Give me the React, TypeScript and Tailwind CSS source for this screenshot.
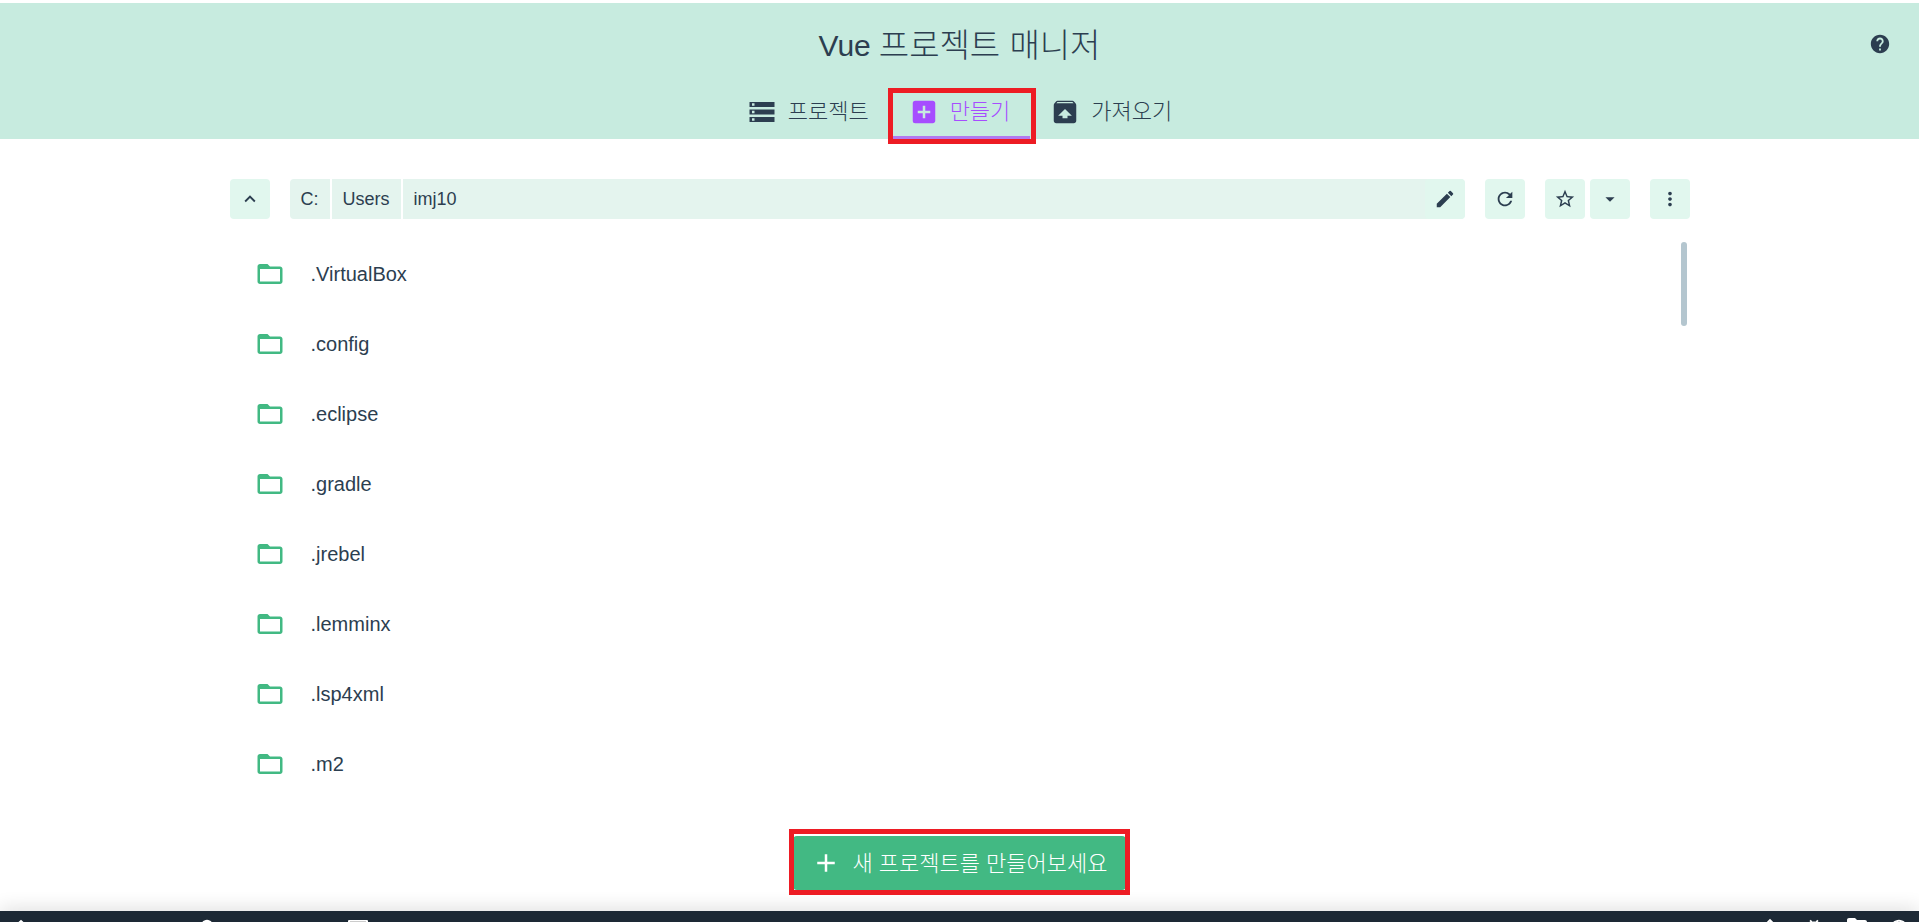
import { IconType } from "react-icons";
import {
  MdAdd,
  MdAddBox,
  MdArrowDropDown,
  MdBugReport,
  MdEdit,
  MdHelp,
  MdHome,
  MdInvertColors,
  MdKeyboardArrowUp,
  MdLanguage,
  MdMoreVert,
  MdPlace,
  MdRefresh,
  MdStarBorder,
  MdStorage,
} from "react-icons/md";

const folders = [
  ".VirtualBox",
  ".config",
  ".eclipse",
  ".gradle",
  ".jrebel",
  ".lemminx",
  ".lsp4xml",
  ".m2",
];

const UnarchiveIcon = ({ className }: { className?: string }) => (
  <svg viewBox="0 0 24 24" fill="currentColor" className={className}>
    <path d="M20.55 5.22l-1.39-1.68C18.88 3.21 18.47 3 18 3H6c-.47 0-.88.21-1.15.55L3.46 5.22C3.17 5.57 3 6.01 3 6.5V19c0 1.1.89 2 2 2h14c1.1 0 2-.9 2-2V6.5c0-.49-.17-.93-.45-1.28zM12 9.5l5.5 5.5H14v2h-4v-2H6.5L12 9.5zM5.12 5l.82-1h12l.93 1H5.12z" />
  </svg>
);

const FolderIcon = () => (
  <svg viewBox="0 0 24 24" fill="currentColor" className="size-[30px] text-[#42b983]">
    <path d="M20 6h-8l-2-2H4c-1.1 0-1.99.9-1.99 2L2 18c0 1.1.9 2 2 2h16c1.1 0 2-.9 2-2V8c0-1.1-.9-2-2-2zm0 12H4V8h16v10z" />
  </svg>
);

type IconButtonProps = {
  icon: IconType;
  label: string;
};

const IconButton = ({ icon: Icon, label }: IconButtonProps) => {
  return (
    <button
      aria-label={label}
      className="flex size-10 shrink-0 items-center justify-center rounded-[4px] bg-[#e1f7ee]"
    >
      <Icon className="size-[22px]" />
    </button>
  );
};

const tabClass = "relative flex h-[55px] items-center gap-[11px] px-5 text-[22px]";

const App = () => {
  return (
    <div className="flex h-screen flex-col overflow-hidden bg-white pt-[3px] font-['Liberation_Sans','Noto_Sans_CJK_KR',sans-serif] text-[#2c3e50]">
      <header className="relative flex shrink-0 flex-col items-center bg-[#c7ebdf]">
        <h1 className="flex h-[81px] items-center gap-2 pt-1 text-[30px] font-light">
          Vue <span className="text-[33px]">프로젝트 매니저</span>
        </h1>
        <nav className="flex font-light">
          <a href="#projects" className={tabClass}>
            <MdStorage className="size-[30px]" />
            프로젝트
          </a>
          <a href="#create" className={`${tabClass} z-10 text-[#a64dff]`}>
            <MdAddBox className="size-[30px]" />
            만들기
            <span className="absolute inset-x-0 bottom-0 h-[3px] bg-[#b279f0]" />
            <span className="absolute -right-1.5 -bottom-[5px] -left-px top-1 border-5 border-[#ed1c24]" />
          </a>
          <a href="#import" className={tabClass}>
            <UnarchiveIcon className="size-[30px]" />
            가져오기
          </a>
        </nav>
        <button aria-label="help" className="absolute top-[30px] right-7">
          <MdHelp className="size-[22px]" />
        </button>
      </header>

      <main className="mx-auto flex min-h-0 w-full max-w-[1460px] flex-1 flex-col pt-10">
        <div className="flex">
          <IconButton icon={MdKeyboardArrowUp} label="up" />
          <div className="mx-5 flex flex-1 gap-0.5 overflow-hidden rounded-[4px] text-lg">
            <button className="bg-[#e4f4ee] px-[11px]">C:</button>
            <button className="bg-[#e4f4ee] px-[11px]">Users</button>
            <div className="flex flex-1 items-center bg-[#e4f4ee]">
              <button className="flex-1 px-[11px] text-left">imj10</button>
              <IconButton icon={MdEdit} label="edit" />
            </div>
          </div>
          <IconButton icon={MdRefresh} label="refresh" />
          <div className="mx-5 flex gap-[5px]">
            <IconButton icon={MdStarBorder} label="favorite" />
            <IconButton icon={MdArrowDropDown} label="favorites" />
          </div>
          <IconButton icon={MdMoreVert} label="more" />
        </div>

        <div className="relative mt-5 min-h-0 flex-1">
          <ul>
            {folders.map((name) => (
              <li key={name}>
                <button className="flex h-[70px] w-full items-center gap-[26px] px-[25px] text-xl">
                  <FolderIcon />
                  {name}
                </button>
              </li>
            ))}
          </ul>
          <div className="absolute top-[3px] right-[3px] h-[84px] w-1.5 rounded-full bg-[#b4c6cf]" />
        </div>

        <div className="mb-[21px] flex justify-center">
          <button className="relative flex h-[54px] items-center gap-[11px] rounded-[4px] bg-[#42b983] px-[18px] text-[22px] font-light text-white">
            <MdAdd className="size-[30px]" />
            새 프로젝트를 만들어보세요
            <span className="absolute -inset-x-1 -top-[7px] -bottom-[5px] border-5 border-[#ed1c24]" />
          </button>
        </div>
      </main>

      {/* status bar, only its top edge fits in the window */}
      <footer className="h-[11px] shrink-0 overflow-hidden bg-[#1d2935] text-white shadow-[0_0_20px_rgba(0,0,0,0.2)]">
        <div className="flex h-[34px] items-center justify-between px-2.5">
          <div className="flex items-center">
            <MdHome className="size-[22px]" />
            <MdPlace className="ml-[165px] size-5" />
            <svg viewBox="0 0 20 20" className="ml-[131px] size-5">
              <rect y="2" width="20" height="16" rx="1" fill="#fff" />
              <rect x="2" y="3" width="16" height="13" fill="#ccc" />
            </svg>
          </div>
          <div className="flex items-center gap-[22px]">
            <MdInvertColors className="size-[22px]" />
            <MdBugReport className="size-[22px]" />
            <svg viewBox="2 4 20 20" fill="currentColor" className="size-5">
              <path d="M10 4H4c-1.1 0-1.99.9-1.99 2L2 18c0 1.1.9 2 2 2h16c1.1 0 2-.9 2-2V8c0-1.1-.9-2-2-2h-8l-2-2z" />
            </svg>
            <MdLanguage className="size-5" />
          </div>
        </div>
      </footer>
    </div>
  );
};

export default App;
